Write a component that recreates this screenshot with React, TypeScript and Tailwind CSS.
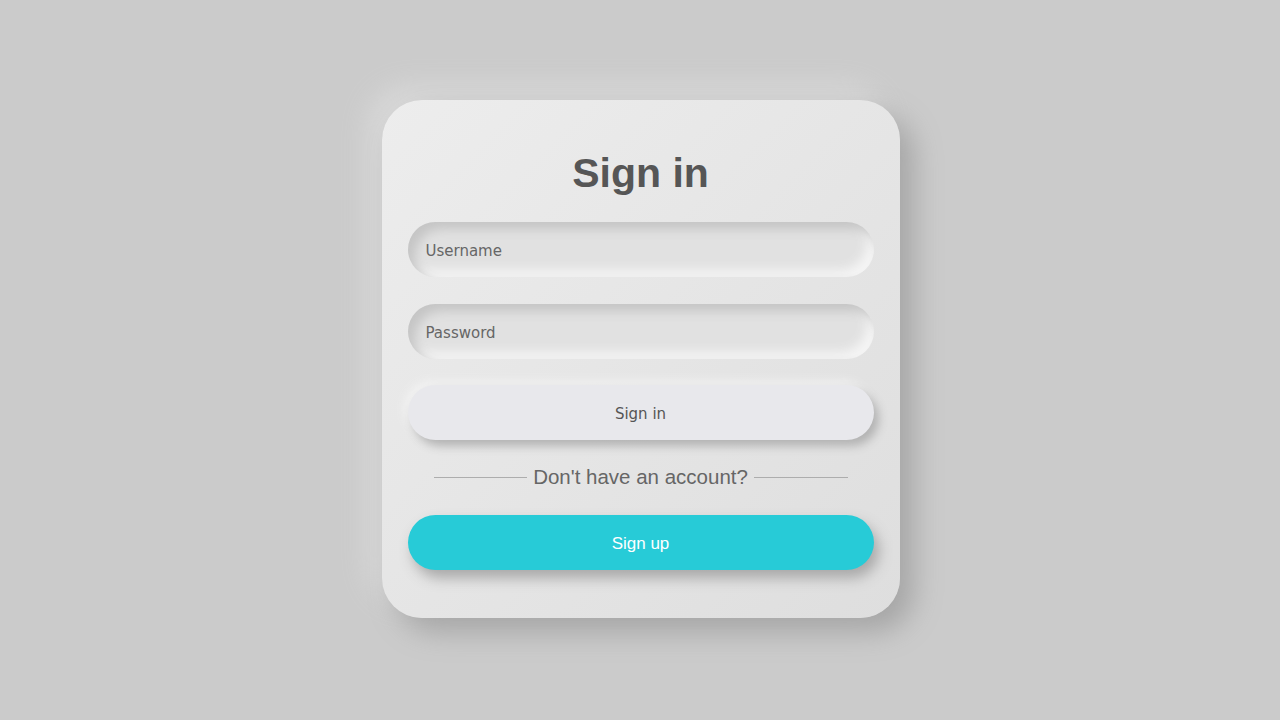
export default function App() {
  return (
    <div className="flex h-screen w-full items-center justify-center bg-[#cbcbcb] pb-[2px] pl-[1px]">
      {/* Card */}
      <div className="flex h-[518px] w-[518px] flex-col rounded-[40px] bg-gradient-to-br from-[#ededed] to-[#dedede] px-[26px] pt-[50px] shadow-[14px_14px_28px_#a6a6a6,-14px_-14px_28px_#d9d9d9]">
        <h1 className="text-center font-['Liberation_Sans',Arial,sans-serif] text-[41px] font-bold leading-[47px] text-[#565656]">
          Sign in
        </h1>

        <input
          type="text"
          placeholder="Username"
          className="mt-[25px] h-[55px] w-full rounded-full bg-[#e1e1e1] px-[18px] pt-[2px] font-['DejaVu_Sans',sans-serif] text-[15px] text-[#555] placeholder:text-[#666] shadow-[inset_7px_7px_11px_#c5c5c5,inset_-7px_-7px_11px_#f5f5f5] outline-none"
        />
        <input
          type="password"
          placeholder="Password"
          className="mt-[27px] h-[55px] w-full rounded-full bg-[#e1e1e1] px-[18px] pt-[2px] font-['DejaVu_Sans',sans-serif] text-[15px] text-[#555] placeholder:text-[#666] shadow-[inset_7px_7px_11px_#c5c5c5,inset_-7px_-7px_11px_#f5f5f5] outline-none"
        />

        <button className="mt-[26px] h-[55px] w-full rounded-full bg-[#e8e8ec] pt-[3px] font-['DejaVu_Sans',sans-serif] text-[15px] text-[#555] shadow-[5px_6px_10px_#b3b3b3,-4px_-4px_10px_#f2f2f2]">
          Sign in
        </button>

        {/* Divider */}
        <div className="mt-[25px] flex items-center gap-[6px] px-[26px]">
          <div className="h-px flex-1 bg-[#adadad]" />
          <span className="font-['Liberation_Sans',Arial,sans-serif] text-[20.5px] leading-[24px] text-[#666]">
            Don't have an account?
          </span>
          <div className="h-px flex-1 bg-[#adadad]" />
        </div>

        <button className="mt-[26px] h-[55px] w-full rounded-full bg-[#27cbd7] pt-[2px] font-['Liberation_Sans',Arial,sans-serif] text-[17px] text-white shadow-[5px_8px_14px_#a8a8a8]">
          Sign up
        </button>
      </div>
    </div>
  );
}
